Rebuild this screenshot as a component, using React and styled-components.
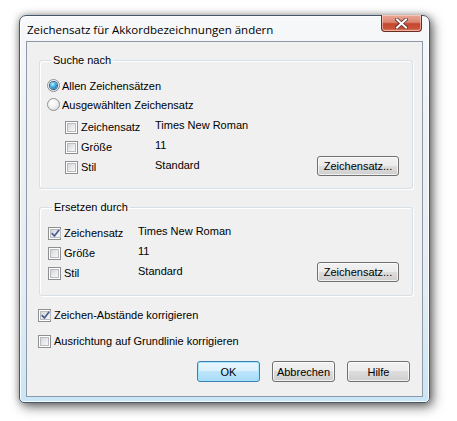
import React from "react";
import styled, { createGlobalStyle } from "styled-components";

const GlobalStyle = createGlobalStyle`
  html, body { margin: 0; padding: 0; background: #ffffff; }
  body {
    font-family: "Liberation Sans", Arial, sans-serif;
    font-size: 11px;
    color: #000;
  }
  * { box-sizing: border-box; }
`;

const Page = styled.div`
  width: 457px;
  height: 421px;
  padding: 15px 0 0 19px;
`;

const Window = styled.div`
  width: 411px;
  height: 388px;
  border: 1px solid #47566a;
  border-radius: 7px 7px 5px 5px;
  background: linear-gradient(180deg, #f7f8fa 0%, #eef1f4 30%, #e4edf3 70%, #c9e6f6 100%);
  box-shadow:
    inset 0 0 0 1px rgba(255, 255, 255, 0.85),
    3px 4px 12px rgba(0, 0, 0, 0.55),
    0 0 7px rgba(0, 0, 0, 0.3);
  display: flex;
  flex-direction: column;
  padding: 0 6px 5px 6px;
`;

const TitleBar = styled.div`
  height: 25px;
  display: flex;
  align-items: flex-start;
  justify-content: space-between;
`;

const Title = styled.div`
  font-family: "Open Sans", "Liberation Sans", sans-serif;
  font-size: 11.5px;
  line-height: 15px;
  padding: 6px 0 0 1px;
  color: #000;
`;

const CloseButton = styled.button`
  width: 41px;
  height: 17px;
  margin: -1px 1px 0 0;
  padding: 0;
  border: 1px solid #6b2b22;
  border-top: none;
  border-radius: 0 0 4px 4px;
  background: linear-gradient(180deg, #eaa898 0%, #dc8672 45%, #c3462e 55%, #c8553a 85%, #e08a6c 100%);
  box-shadow: inset 0 0 0 1px rgba(255, 220, 210, 0.55);
  display: flex;
  align-items: center;
  justify-content: center;
`;

const Client = styled.div`
  flex: 1;
  border: 1px solid #8d99a6;
  background: #f0f0f0;
  display: flex;
  flex-direction: column;
  padding: 11px 9px 0 11px;
`;

const Group = styled.fieldset`
  margin: ${(p) => p.$top || 0}px 0 0 1px;
  padding: 9px 13px ${(p) => p.$bottom || 11}px ${(p) => p.$left || 7}px;
  border: 1px solid #d5dfe5;
  border-radius: 3px;
  box-shadow: inset 1px 1px 0 #ffffff, 1px 1px 0 #ffffff;
  min-width: 0;
`;

const Legend = styled.legend`
  margin-left: 4px;
  padding: 0 2px;
  line-height: 14px;
  height: 14px;
`;

const RadioRow = styled.label`
  display: flex;
  align-items: center;
  height: 19px;
  gap: 2px;
`;

const RadioCircle = styled.span`
  width: 13px;
  height: 13px;
  border-radius: 50%;
  border: 1px solid #8f9090;
  background: radial-gradient(circle at 40% 35%, #ffffff 0%, #f2f2f2 45%, #cfcfcf 100%);
  display: inline-flex;
  align-items: center;
  justify-content: center;
  flex: none;
  &::after {
    content: "";
    display: ${(p) => (p.$checked ? "block" : "none")};
    width: 7px;
    height: 7px;
    border-radius: 50%;
    background: radial-gradient(circle at 38% 32%, #c4f0ff 0%, #46b4e6 40%, #115a95 100%);
    box-shadow: 0 0 0 1px #2d5f88;
  }
`;

const CheckGrid = styled.div`
  display: grid;
  grid-template-columns: 90px 1fr auto;
  grid-auto-rows: 20px;
  align-items: center;
  margin: ${(p) => p.$top || 0}px 0 0 ${(p) => p.$indent || 0}px;
`;

const CheckLabel = styled.label`
  display: flex;
  align-items: center;
  height: 20px;
  gap: 3px;
  white-space: nowrap;
`;

const Box = styled.span`
  width: 13px;
  height: 13px;
  border: 1px solid #8f8f8f;
  background: #ffffff;
  padding: 1px;
  flex: none;
  display: inline-flex;
`;

const BoxInner = styled.span`
  flex: 1;
  border: 1px solid #b8bcc2;
  background: linear-gradient(135deg, #d2d4d7 0%, #e8e9ea 50%, #f7f7f7 100%);
  display: flex;
  align-items: center;
  justify-content: center;
`;

const Value = styled.span`
  padding-bottom: 4px;
  white-space: nowrap;
`;

const SmallButton = styled.button`
  grid-column: 3;
  width: 82px;
  height: 20px;
  margin-top: -2px;
  font: inherit;
  color: #000;
  border: 1px solid #707070;
  border-radius: 3px;
  background: linear-gradient(180deg, #f2f2f2 0%, #ebebeb 49%, #dddddd 50%, #cfcfcf 100%);
  box-shadow: inset 0 0 0 1px rgba(255, 255, 255, 0.7);
  padding: 0;
`;

const Options = styled.div`
  margin-top: 9px;
  display: flex;
  flex-direction: column;
  gap: 6px;
`;

const ButtonRow = styled.div`
  margin-top: 10px;
  padding-right: 3px;
  display: flex;
  justify-content: flex-end;
  gap: 12px;
`;

const DialogButton = styled.button`
  width: 63px;
  height: 21px;
  padding: 0;
  font: inherit;
  color: #000;
  border: 1px solid ${(p) => (p.$default ? "#3c7fb1" : "#707070")};
  border-radius: 3px;
  background: ${(p) =>
    p.$default
      ? "linear-gradient(180deg, #eaf6fd 0%, #d9f0fc 49%, #bee6fd 50%, #a7d9f5 100%)"
      : "linear-gradient(180deg, #f2f2f2 0%, #ebebeb 49%, #dddddd 50%, #cfcfcf 100%)"};
  box-shadow: inset 0 0 0 1px
    ${(p) => (p.$default ? "rgba(160, 230, 255, 0.9)" : "rgba(255, 255, 255, 0.7)")};
`;

const CheckMark = () => (
  <svg width="9" height="9" viewBox="0 0 9 9">
    <path d="M1.2 4.6 L3.4 7 L7.8 1.3" fill="none" stroke="#4a5f8f" strokeWidth="1.7" strokeLinecap="round" strokeLinejoin="round" />
  </svg>
);

const CloseX = () => (
  <svg width="13" height="11" viewBox="0 0 13 11">
    <path d="M2 1.5 L11 9.5 M11 1.5 L2 9.5" stroke="#5a2a24" strokeWidth="3.6" strokeLinecap="square" />
    <path d="M2 1.5 L11 9.5 M11 1.5 L2 9.5" stroke="#ffffff" strokeWidth="2" strokeLinecap="square" />
  </svg>
);

const Check = ({ checked, children }) => (
  <CheckLabel>
    <Box>
      <BoxInner>{checked && <CheckMark />}</BoxInner>
    </Box>
    {children}
  </CheckLabel>
);

const Radio = ({ checked, children }) => (
  <RadioRow>
    <RadioCircle $checked={checked} />
    {children}
  </RadioRow>
);

const FontRows = ({ zeichensatz }) => (
  <>
    <Check checked={zeichensatz}>Zeichensatz</Check>
    <Value>Times New Roman</Value>
    <span />
    <Check>Größe</Check>
    <Value>11</Value>
    <span />
    <Check>Stil</Check>
    <Value>Standard</Value>
    <SmallButton>Zeichensatz...</SmallButton>
  </>
);

export default function App() {
  return (
    <>
      <GlobalStyle />
      <Page>
        <Window>
          <TitleBar>
            <Title>Zeichensatz für Akkordbezeichnungen ändern</Title>
            <CloseButton aria-label="Schließen">
              <CloseX />
            </CloseButton>
          </TitleBar>
          <Client>
            <Group>
              <Legend>Suche nach</Legend>
              <Radio checked>Allen Zeichensätzen</Radio>
              <Radio>Ausgewählten Zeichensatz</Radio>
              <CheckGrid $top={3} $indent={18}>
                <FontRows />
              </CheckGrid>
            </Group>
            <Group $top={11} $left={8} $bottom={12}>
              <Legend>Ersetzen durch</Legend>
              <CheckGrid>
                <FontRows zeichensatz />
              </CheckGrid>
            </Group>
            <Options>
              <Check checked>Zeichen-Abstände korrigieren</Check>
              <Check>Ausrichtung auf Grundlinie korrigieren</Check>
            </Options>
            <ButtonRow>
              <DialogButton $default>OK</DialogButton>
              <DialogButton>Abbrechen</DialogButton>
              <DialogButton>Hilfe</DialogButton>
            </ButtonRow>
          </Client>
        </Window>
      </Page>
    </>
  );
}
